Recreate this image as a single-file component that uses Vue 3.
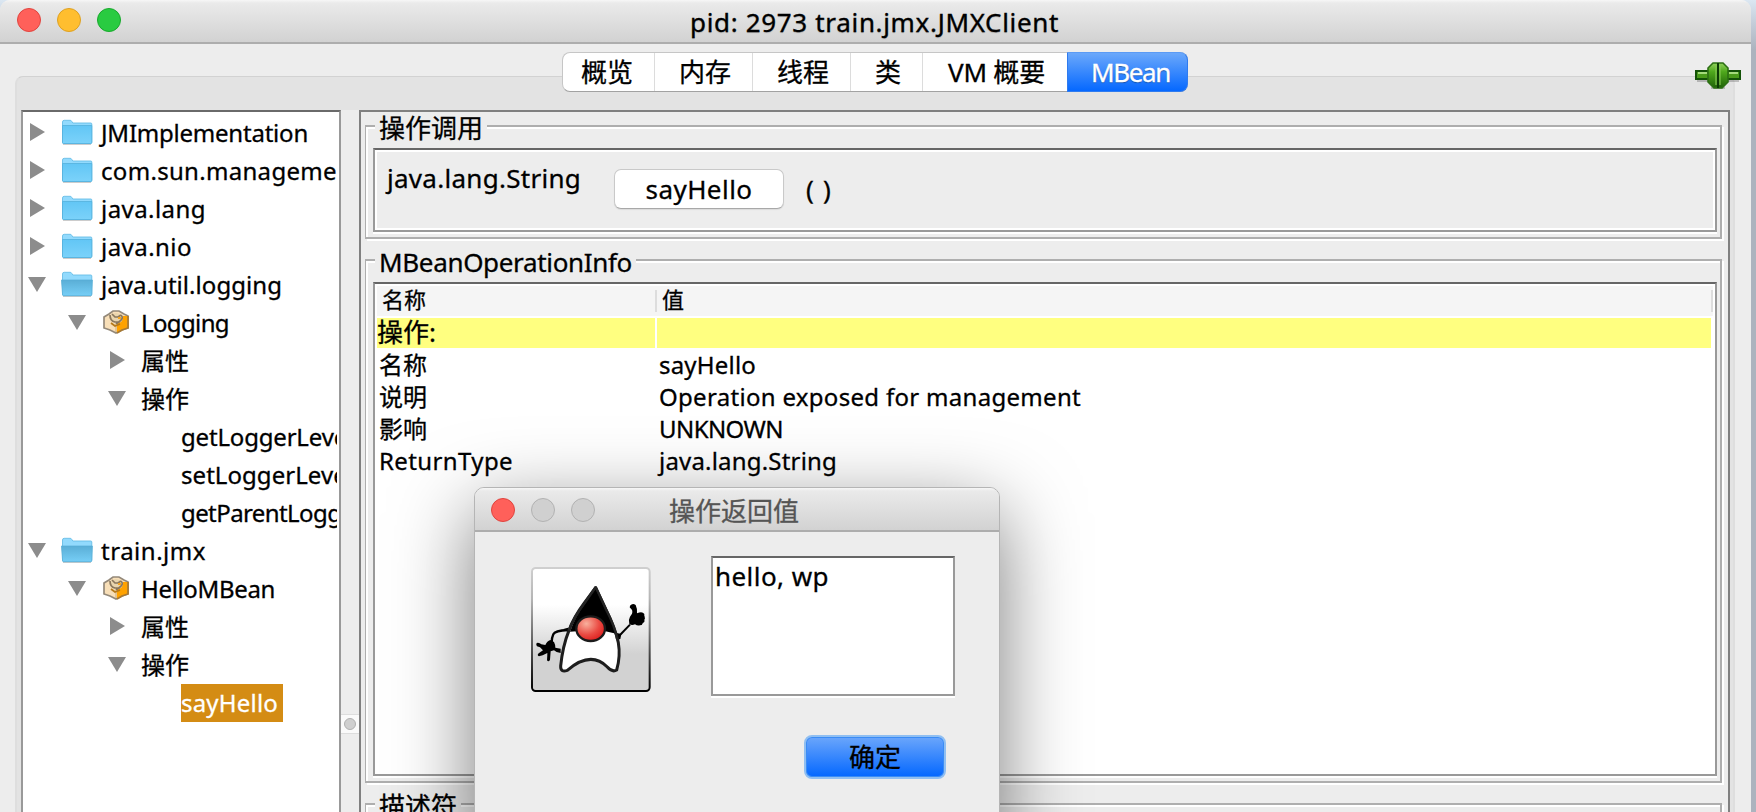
<script setup>
import { computed } from 'vue'

// Spreads a label's letters so that it fills the given width in pixels.
const vFit = (el, { value }) => {
  if (!value) return
  el.style.letterSpacing = '0px'
  const natural = el.getBoundingClientRect().width
  el.style.letterSpacing = (value - natural) / [...el.textContent].length + 'px'
}

const tabs = [
  { label: '概览', size: 'w1' },
  { label: '内存', size: 'w2' },
  { label: '线程', size: 'w2' },
  { label: '类', size: 'w3' },
  { label: 'VM 概要', size: 'w4', fit: 97 },
  { label: 'MBean', size: 'w5', active: true, fit: 79 },
]

const tree = [
  { level: 0, icon: 'folder', label: 'JMImplementation', fit: 207 },
  { level: 0, icon: 'folder', label: 'com.sun.management', fit: 260 },
  { level: 0, icon: 'folder', label: 'java.lang', fit: 105 },
  { level: 0, icon: 'folder', label: 'java.nio', fit: 91 },
  { level: 0, icon: 'folder', label: 'java.util.logging', fit: 181, open: true },
  { level: 1, icon: 'bean', label: 'Logging', fit: 88, open: true },
  { level: 2, label: '属性' },
  { level: 2, label: '操作', open: true },
  { level: 3, label: 'getLoggerLevel', fit: 172 },
  { level: 3, label: 'setLoggerLevel', fit: 172 },
  { level: 3, label: 'getParentLoggerName', fit: 248 },
  { level: 0, icon: 'folder', label: 'train.jmx', fit: 105, open: true },
  { level: 1, icon: 'bean', label: 'HelloMBean', fit: 134, open: true },
  { level: 2, label: '属性' },
  { level: 2, label: '操作', open: true },
  { level: 3, label: 'sayHello', fit: 97, selected: true },
]

const info = [
  { name: '名称', value: 'sayHello', fit: 97 },
  { name: '说明', value: 'Operation exposed for management', fit: 422 },
  { name: '影响', value: 'UNKNOWN', fit: 124 },
  { name: 'ReturnType', nameFit: 134, value: 'java.lang.String', fit: 178, jay: true },
]

const rows = computed(() => tree.map((n) => ({ ...n, leaf: n.level === 3, jay: /^[jJ]/.test(n.label) })))
</script>

<template>
  <div class="desktop">
    <div class="window">
      <header class="titlebar">
        <i class="light red"></i><i class="light amber"></i><i class="light green"></i>
        <h1><span v-fit="369">pid: 2973 train.jmx.JMXClient</span></h1>
      </header>

      <nav class="tabs">
        <div v-for="t in tabs" :key="t.label" class="tab" :class="[t.size, { active: t.active }]">
          <span v-fit="t.fit">{{ t.label }}</span>
        </div>
      </nav>

      <svg class="plug" viewBox="0 0 46 28" width="46" height="28">
        <defs>
          <linearGradient id="pg" x1="0" y1="0" x2="0" y2="1">
            <stop offset="0" stop-color="#8fd05a" /><stop offset=".35" stop-color="#4fa81c" /><stop offset="1" stop-color="#1f6108" />
          </linearGradient>
        </defs>
        <path d="M2 18h42v2H2zM16 25h14v2H16z" fill="#000" opacity=".2" />
        <rect x="1" y="9" width="44" height="8" fill="#4a9c1a" stroke="#145208" stroke-width="2" />
        <path d="M3 11h9M34 11h9" stroke="#a5db7b" stroke-width="2" />
        <path d="M18 1h10l2 2 3 3v14l-3 3-3 3h-8l-3-3-3-3V6l3-3z" fill="url(#pg)" stroke="#2c6f14" stroke-width="1.6" />
        <path d="M23 1v25" stroke="#0b3a04" stroke-width="2" />
        <path d="M21 3v20M25 3v20" stroke="#86c955" stroke-width="1.5" opacity=".75" />
      </svg>

      <div class="pane">
        <div class="split">
          <div class="tree">
            <div v-for="(r, i) in rows" :key="i" class="row" :class="'l' + r.level">
              <span v-if="!r.leaf" class="arrow">
                <svg v-if="r.open" width="18" height="18" viewBox="0 0 18 18"><path d="M0 2h18L9 17z" fill="#8c8c8c" /></svg>
                <svg v-else width="18" height="18" viewBox="0 0 18 18"><path d="M2 0v18L17 9z" fill="#8c8c8c" /></svg>
              </span>
              <span v-if="r.icon === 'folder'" class="icon folder">
                <svg width="32" height="27" viewBox="0 0 32 27">
                  <defs>
                    <linearGradient id="fg" x1="0" y1="0" x2="0" y2="1">
                      <stop offset="0" stop-color="#62c6f5" /><stop offset="1" stop-color="#7bd2fa" />
                    </linearGradient>
                    <linearGradient id="fo" x1="0" y1="0" x2="0" y2="1">
                      <stop offset="0" stop-color="#5aaed6" /><stop offset="1" stop-color="#76cef6" />
                    </linearGradient>
                  </defs>
                  <path d="M2 25h28v1H2z" fill="#000" opacity=".2" />
                  <path d="M1.5 3q0-1.700 1.700-1.700h6q1 0 1.500 1l1.200 1.700h17.900q1 0 1 1v18q0 1.500-1.500 1.500h-26.300q-1.500 0-1.500-1.500z" fill="#92dafd" stroke="#68bde6" stroke-width=".9" />
                  <path v-if="!r.open" d="M1.500 6.500h29.300v17q0 1-1 1H2.500q-1 0-1-1z" fill="url(#fg)" stroke="#53b0dc" stroke-width=".8" />
                  <path v-else d="M.4 9h31l-.7 15q-.1.700-1 .7H2.500q-.8 0-.9-.7z" fill="url(#fo)" stroke="#58add5" stroke-width=".7" />
                </svg>
              </span>
              <span v-if="r.icon === 'bean'" class="icon bean">
                <svg width="26" height="24" viewBox="0 0 26 24">
                  <path d="M1 7L6 4 10 1h6l5 3 4 2v12l-6 2-6 3-6-3-6-2z" fill="#f8dfb8" stroke="#94897a" stroke-width="1.700" />
                  <path d="M14 13l5-2 1-5h5v12l-6 2-5 3z" fill="#ffa200" />
                  <path d="M25 6v12l-6 2-5 3" fill="none" stroke="#a87a34" stroke-width="1.700" />
                  <path d="M8 5q5-4 10 0l2 3-2 4-5 2-5-3-2-3z" fill="#e9d5ae" />
                  <path d="M7 5q0 6 5 7h5M9 4l3 3h3l3-2M18 5q3 3-1 6l-4 3" fill="none" stroke="#8a775c" stroke-width="1.700" />
                  <path d="M13 14v8" stroke="#d6b27a" stroke-width="1.200" />
                  <path d="M8 13l4 3 5-2" fill="none" stroke="#b5791a" stroke-width="1.800" />
                  <path d="M15 7h3v2h-3z" fill="#f5a623" />
                </svg>
              </span>
              <span class="label" :class="{ selected: r.selected, jay: r.jay }"><span v-fit="r.fit">{{ r.label }}</span></span>
            </div>
          </div>

          <div class="divider"><div class="grip"><i></i></div></div>

          <main class="detail">
            <section class="group invoke">
              <div class="legend"><span>操作调用</span></div>
              <div class="bevel call">
                <span class="return"><span v-fit="194">java.lang.String</span></span>
                <button class="op"><span v-fit="107">sayHello</span></button>
                <span class="parens"><span v-fit="26">( )</span></span>
              </div>
            </section>

            <section class="group meta">
              <div class="legend"><span v-fit="253">MBeanOperationInfo</span></div>
              <div class="bevel table">
                <div class="thead"><span class="c1">名称</span><span class="c2">值</span></div>
                <div class="trow head"><span class="c1">操作:</span><span class="c2"></span></div>
                <div v-for="r in info" :key="r.name" class="trow">
                  <span class="c1"><span v-fit="r.nameFit">{{ r.name }}</span></span>
                  <span class="c2" :class="{ jay: r.jay }"><span v-fit="r.fit">{{ r.value }}</span></span>
                </div>
              </div>
            </section>

            <section class="group descriptor">
              <div class="legend"><span>描述符</span></div>
            </section>
          </main>
        </div>
      </div>
    </div>

    <div class="dialog">
      <header class="titlebar small">
        <i class="light red"></i><i class="light off"></i><i class="light off"></i>
        <h1><span>操作返回值</span></h1>
      </header>
      <div class="body">
        <svg class="duke" width="120" height="125" viewBox="93 81 360 375">
          <defs>
            <linearGradient id="db" x1="0" y1="0" x2="0" y2="1">
              <stop offset="0" stop-color="#fff" /><stop offset=".3" stop-color="#fff" /><stop offset=".7" stop-color="#d2d2d2" /><stop offset="1" stop-color="#d2d2d2" />
            </linearGradient>
            <linearGradient id="ds" x1="0" y1="0" x2="0" y2="1">
              <stop offset="0" stop-color="#cfcfcf" /><stop offset=".25" stop-color="#b5b5b5" /><stop offset=".85" stop-color="#222" /><stop offset="1" stop-color="#000" />
            </linearGradient>
            <radialGradient id="dn" cx=".35" cy=".3" r=".75">
              <stop offset="0" stop-color="#f8b09d" /><stop offset=".6" stop-color="#ea4a42" /><stop offset="1" stop-color="#dc1d1d" />
            </radialGradient>
          </defs>
          <rect x="96" y="84" width="353" height="369" rx="11" fill="url(#db)" stroke="url(#ds)" stroke-width="6" />
          <path d="M203 270Q165 272 160 283T155 306" fill="none" stroke="#000" stroke-width="7" />
          <path d="M190 267l14-4v14zM350 279l14 3-3 15-10 3z" fill="#000" />
          <path d="M357 288L390 254" stroke="#000" stroke-width="6" />
          <path d="M110 309q8-2 14 4l12 2q5-12 15-15l11 6q5 10 4 17l16 3v13q-12 0-20-8l-10 3q-1 14-2 25-4 8-9 2 1-13 1-22l-14 7-11 3q-7-3-1-9l13-9-9-9-9-3q-4-5-1-10z" fill="#000" />
          <path d="M390 197q8-9 17-2 6 13 4 25 16-7 22 2-1 4 1 8 2 7-1 9 2 8-4 9-2 8-9 8-8 2-15-3-10 4-17-1-4-12 2-22l6-9q3-10-3-15-6-3-3-9z" fill="#000" />
          <path d="M287 143L252 190Q222 230 207 271Q188 318 182 378Q181 398 202 391Q272 331 322 381Q337 398 350 390Q362 348 355 308Q347 268 318 209Z" fill="#fff" stroke="#1d1d1d" stroke-width="9" stroke-linejoin="round" />
          <path d="M287 147L256 190Q226 230 210 275L240 273 313 273 349 281Q340 255 316 211Z" fill="#000" />
          <path d="M287 141L254 189Q218 236 206 272M287 141L318 208Q345 260 352 300" fill="none" stroke="#242424" stroke-width="7" />
          <ellipse cx="272" cy="266" rx="43" ry="37" fill="url(#dn)" stroke="#1b1b1b" stroke-width="7" />
        </svg>
        <div class="result"><span v-fit="114">hello, wp</span></div>
        <button class="ok">确定</button>
      </div>
    </div>
  </div>
</template>

<style>
html, body { overflow: hidden; }
</style>

<style scoped>
* { box-sizing: border-box; }
.desktop {
  position: relative;
  width: 1756px;
  height: 812px;
  overflow: hidden;
  background: linear-gradient(#dbe7f2 0, #c3ccd8 24px, #acb3be 50px, #acb3be 100%);
  font-family: "Noto Sans", "Noto Sans CJK SC", sans-serif;
  color: #000;
  white-space: nowrap;
  -webkit-text-stroke: .3px currentColor;
}
.desktop span { white-space: pre; }
.window {
  position: relative;
  display: flex;
  flex-direction: column;
  width: 1751px;
  height: 812px;
  background: #ededed;
  border-radius: 10px 10px 0 0;
  overflow: hidden;
}
.titlebar {
  position: relative;
  display: flex;
  align-items: center;
  flex: none;
  gap: 16px;
  height: 44px;
  padding: 0 0 2px 17px;
  border-bottom: 2px solid #adadad;
  background: linear-gradient(#f7f7f7 0, #eaeaea 3px, #d2d2d2 100%);
}
.titlebar h1 {
  position: absolute;
  left: 0;
  right: 0;
  top: 0;
  margin: 0;
  padding-right: 2px;
  text-align: center;
  font-size: 26px;
  font-weight: 400;
  line-height: 44px;
  text-shadow: 0 1px 1px rgba(0, 0, 0, .2);
}
.light { width: 24px; height: 24px; border-radius: 50%; border: 1px solid; }
.red { background: #ff605a; border-color: #e0443e; }
.amber { background: #ffbe2f; border-color: #dda022; }
.green { background: #29cb41; border-color: #18a92c; }
.off { background: #d0d0d0; border-color: #b2b2b2; }

.tabs {
  position: absolute;
  z-index: 2;
  left: 562px;
  top: 52px;
  display: flex;
  height: 40px;
  border-radius: 8px;
  border: 1px solid #c6c6c6;
  border-bottom-color: #a2a2a2;
  background: #fff;
  font-size: 26px;
  line-height: 38px;
}
.tab { border-right: 1px solid #dcdcdc; padding-left: 18px; }
.w1 { width: 92px; }
.w2 { width: 98px; padding-left: 24px; }
.w3 { width: 72px; padding-left: 24px; }
.w4 { width: 144px; padding-left: 25px; border-right: 0; }
.w5 { width: 121px; }
.tab.active {
  margin: -1px -1px -1px 0;
  padding: 0 0 0 23px;
  border: 1px solid #2f7bef;
  border-top-color: #5b9bf5;
  border-radius: 0 8px 8px 0;
  background: linear-gradient(#6ba8fb, #0568ff);
  color: #fff;
  line-height: 38px;
  text-shadow: 0 1px 1px rgba(0, 0, 0, .35);
}
.plug { position: absolute; z-index: 3; left: 1695px; top: 62px; }

.pane {
  flex: 1;
  margin: 32px 16px 0 15px;
  padding: 32px 3px 0 4px;
  border: 2px solid #dedede;
  border-top: 1px solid #d2d2d2;
  border-bottom: 0;
  border-radius: 8px 8px 0 0;
  background: #e3e3e3;
}
.split { display: flex; height: 704px; margin-top: 1px; background: #ededed; }
.tree {
  width: 320px;
  flex: none;
  padding: 2px 2px 0 0;
  border: 2px solid #999;
  border-top-color: #6a6a6a;
  border-bottom: 0;
  background: #fff;
  font-size: 24px;
  overflow: hidden;
}
.row { display: flex; height: 38px; line-height: 38px; overflow: hidden; }
.arrow { width: 18px; flex: none; line-height: 0; padding-top: 9px; }
.icon { flex: none; line-height: 0; }
.folder { width: 32px; padding-top: 5px; margin-left: 15px; }
.bean { width: 26px; padding-top: 6px; margin-left: 17px; }
.label { flex: none; }
.l0 { padding-left: 5px; }
.l0 .label { margin-left: 8px; }
.l1 { padding-left: 45px; }
.l1 .label { margin-left: 12px; }
.l2 { padding-left: 85px; }
.l2 .label { margin-left: 15px; }
.l3 { padding-left: 158px; }
.l3 .label { margin-left: 0; }
.selected { width: 102px; background: #d48c14; color: #fff; }

.divider { width: 18px; flex: none; padding-top: 604px; }
.grip {
  display: flex;
  align-items: center;
  justify-content: center;
  height: 20px;
  border: 1px solid #ddd;
  border-width: 1px 0;
  background: #fafafa;
}
.grip i { width: 12px; height: 12px; border-radius: 50%; border: 1px solid #b0b0b0; background: #cfcfcf; }

.detail {
  width: 1372px;
  padding: 13px 5px 0 4px;
  border: 2px solid #808080;
  border-bottom: 0;
}
.group {
  width: 1357px;
  border: 2px solid #aeaeae;
  border-left-width: 1px;
  box-shadow: inset 2px 2px 0 #fff, 2px 2px 0 #fff;
}
.invoke { height: 114px; }
.meta { height: 524px; margin-top: 20px; }
.descriptor { height: 60px; margin-top: 20px; }
.legend {
  width: fit-content;
  height: 26px;
  margin: -14px 0 0 9px;
  padding: 0 4px;
  background: #ededed;
  font-size: 26px;
  line-height: 31px;
}
.bevel {
  width: 1344px;
  margin: 9px 0 0 7px;
  border: 2px solid #999;
  border-top-color: #666;
  box-shadow: inset 0 0 0 2px #fff, 0 2px 0 #fff;
}
.call { display: flex; height: 84px; padding: 19px 0 0 12px; font-size: 26px; }
.return { width: 227px; line-height: 18px; }
button { font-family: inherit; font-size: 26px; padding: 0; color: #000; -webkit-text-stroke: inherit; }
.op {
  width: 170px;
  height: 40px;
  border: 1px solid #c9c9c9;
  border-bottom-color: #a8a8a8;
  border-radius: 7px;
  background: #fff;
  line-height: 36px;
  box-shadow: 0 1px 1px rgba(0, 0, 0, .08);
}
.parens { margin-left: 22px; line-height: 40px; }

.table { height: 494px; padding: 2px; background: #fff; font-size: 24px; }
.thead, .trow { display: grid; grid-template-columns: 280px 1fr; }
.thead { height: 30px; margin-bottom: 2px; background: #f5f5f5; font-size: 22px; line-height: 27px; }
.thead .c1, .thead .c2 {
  height: 30px;
  padding-left: 5px;
  background: linear-gradient(#ddd, #ddd) no-repeat right 4px / 2px 22px;
  background-position: right 0 top 4px;
}
.trow { height: 32px; line-height: 29px; }
.trow .c1, .trow .c2 { margin-right: 2px; padding-left: 2px; }
.trow.head { height: 30px; margin-bottom: 2px; font-size: 26px; }
.trow.head .c1, .trow.head .c2 { height: 30px; background: #ffff80; padding-left: 0; }

.dialog {
  position: absolute;
  left: 474px;
  top: 487px;
  width: 526px;
  height: 360px;
  border: 1px solid #b5b5b5;
  border-radius: 10px 10px 0 0;
  background: #ededed;
  box-shadow: 0 24px 80px rgba(0, 0, 0, .52);
}
.titlebar.small { border-radius: 9px 9px 0 0; padding: 2px 0 0 16px; }
.titlebar.small h1 { color: #555; padding-right: 6px; text-shadow: none; line-height: 46px; }
.body { display: grid; grid-template-columns: 180px 244px; padding: 24px 0 0 56px; }
.duke { margin-top: 11px; }
.result {
  height: 140px;
  padding: 0 0 0 2px;
  border: 2px solid #999;
  border-top-color: #666;
  background: #fff;
  box-shadow: 0 2px 0 #fff;
  font-size: 26px;
  line-height: 36px;
}
.ok {
  grid-column: 2;
  width: 142px;
  height: 44px;
  margin: 39px 0 0 93px;
  border: 2px solid #90bff2;
  border-radius: 8px;
  background: linear-gradient(#6ba6fb, #0367ff);
  box-shadow: inset 0 0 0 1px #3b8cf5;
  line-height: 37px;
}
</style>
